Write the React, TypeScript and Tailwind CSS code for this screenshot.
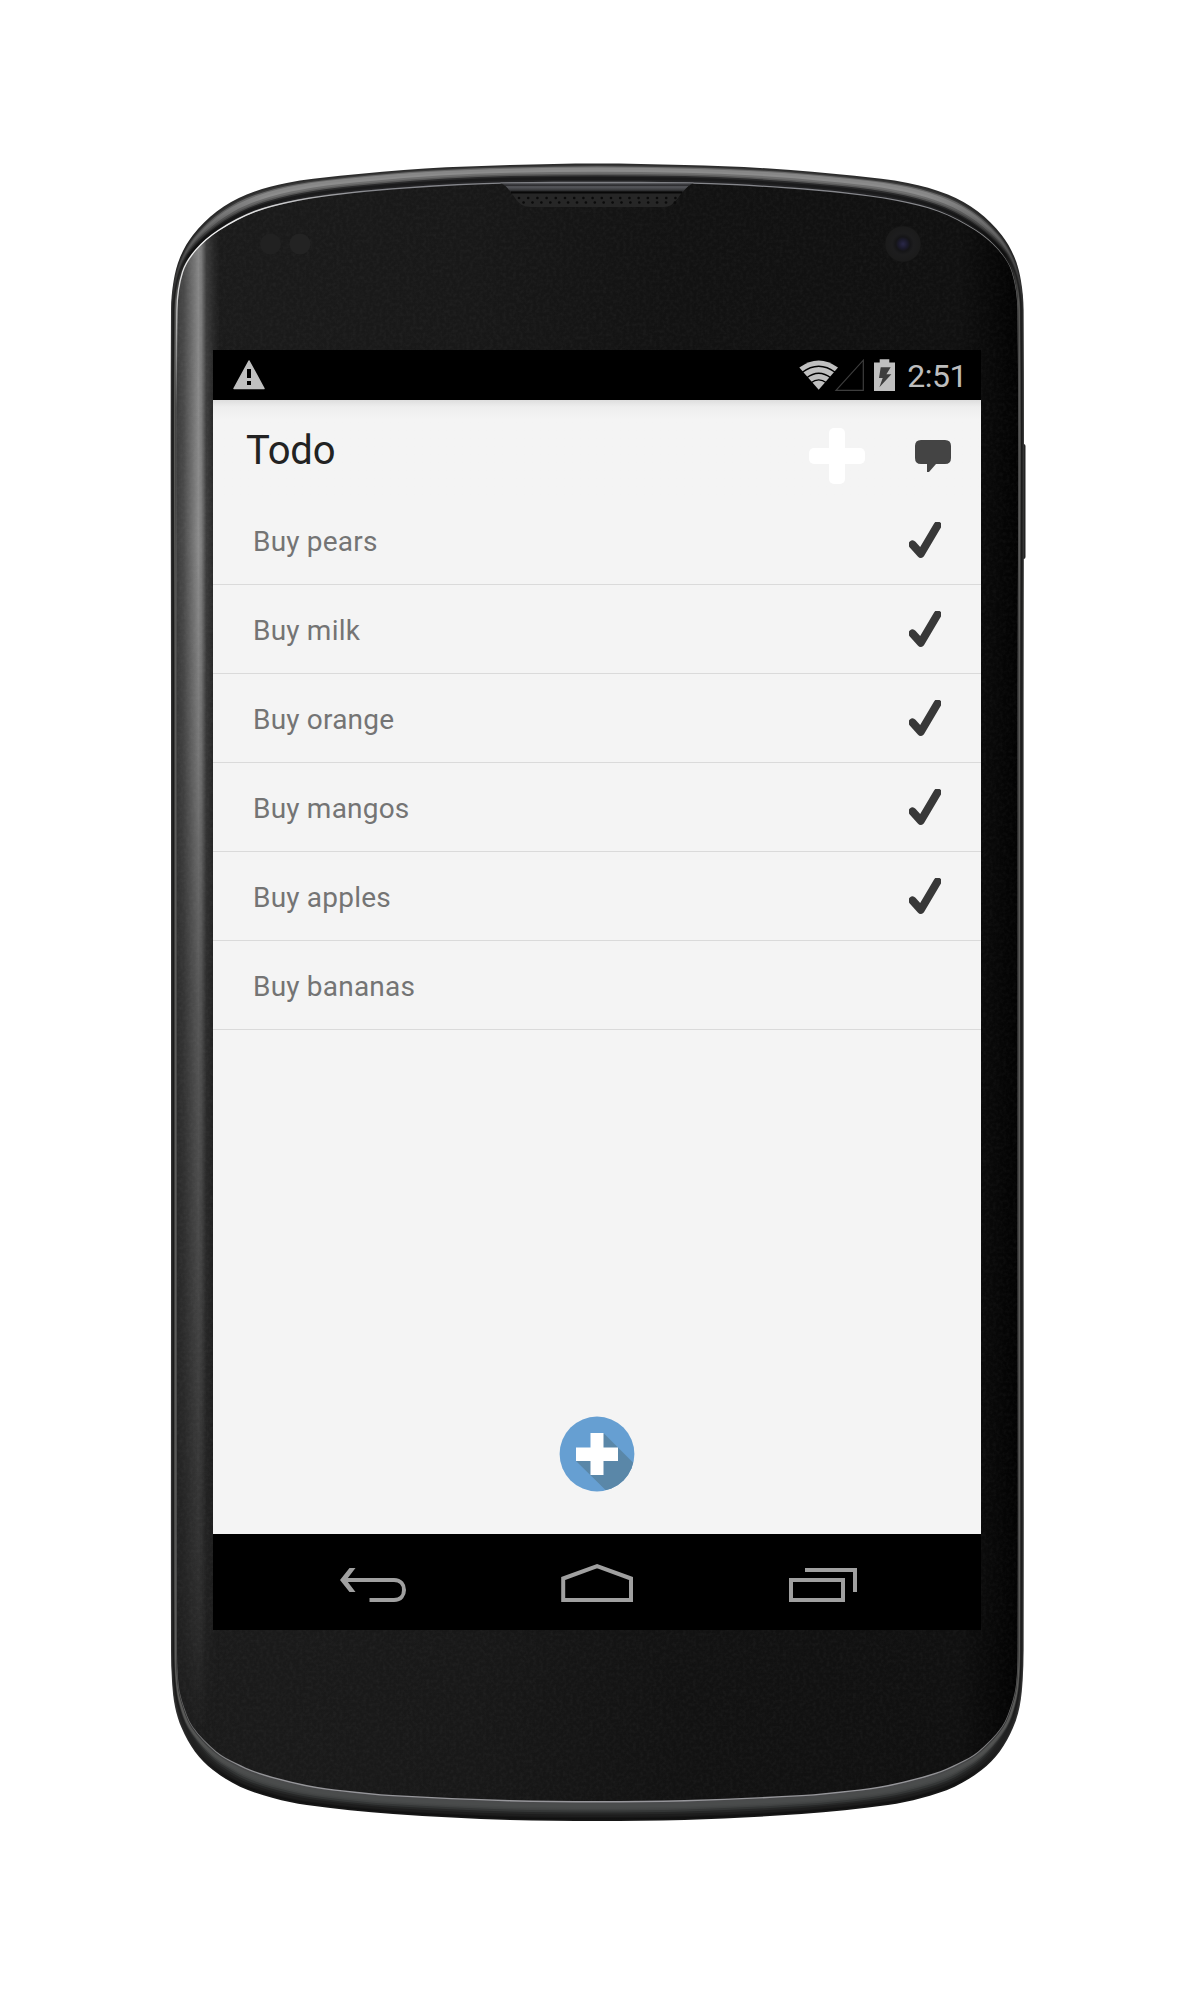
import React from "react";

type Pt = [number, number];

// Left half of the body contour, top centre to bottom centre, and the glass edge inside it.
const OUTER: Pt[] = [
  [597.3, 163.5], [510, 165], [425, 168.5], [340, 175.8], [286.7, 183], [246.7, 194.5], [216.7, 211.5],
  [193, 235], [180, 257.5], [173.6, 281], [171, 310], [171, 700], [171, 1250], [171, 1650],
  [172, 1681], [175, 1706.7], [181.7, 1728], [195, 1751.7], [213, 1770], [240, 1786.7],
  [273, 1798], [306.7, 1805], [393, 1814], [510, 1820], [597.3, 1821],
];
const INNER: Pt[] = [
  [597.3, 183], [510, 183.5], [460, 185.3], [407, 188.5], [350, 193.5], [300, 200.5], [256.7, 211.5],
  [220, 230], [196.7, 249.5], [183, 271.5], [177.2, 310], [177, 700], [177, 1250], [177, 1650],
  [178.5, 1684], [182.7, 1703], [193, 1727], [216.7, 1751.7], [236, 1763], [260, 1773],
  [306.7, 1785], [345, 1790.5], [393, 1795], [510, 1800], [597.3, 1801],
];

function contour(t: number) {
  const left = OUTER.map(([x, y], i): Pt => [x + (INNER[i][0] - x) * t, y + (INNER[i][1] - y) * t]);
  const right = left.slice(1, -1).reverse().map(([x, y]): Pt => [1194.6 - x, y]);
  const p = [...left, ...right];
  const n = p.length;
  let d = `M${p[0][0]} ${p[0][1]}`;
  for (let i = 0; i < n; i++) {
    const a = p[(i - 1 + n) % n], b = p[i], c = p[(i + 1) % n], e = p[(i + 2) % n];
    const len = Math.hypot(c[0] - b[0], c[1] - b[1]);
    const l0 = Math.hypot(c[0] - a[0], c[1] - a[1]) || 1;
    const l1 = Math.hypot(e[0] - b[0], e[1] - b[1]) || 1;
    const k = len / 3;
    d += `C${b[0] + ((c[0] - a[0]) / l0) * k} ${b[1] + ((c[1] - a[1]) / l0) * k} ${c[0] - ((e[0] - b[0]) / l1) * k} ${c[1] - ((e[1] - b[1]) / l1) * k} ${c[0]} ${c[1]}`;
  }
  return d + "Z";
}

// Depth, then the rim's colour at the top, the corners, the sides and the bottom.
const RINGS: [number, string, string, string, string][] = [
  [0, "#2c2c2c", "#222222", "#3a3a3a", "#161616"],
  [0.08, "#3a3a3a", "#2d2d2d", "#303030", "#101010"],
  [0.14, "#6a6a6a", "#444444", "#2a2a2a", "#161616"],
  [0.2, "#878787", "#505050", "#242424", "#1d1d1d"],
  [0.32, "#8c8c8c", "#383838", "#1c1c1c", "#262727"],
  [0.42, "#707070", "#222222", "#1a1a1a", "#343636"],
  [0.52, "#585858", "#151515", "#303030", "#414343"],
  [0.6, "#2a2a2b", "#101010", "#555553", "#474949"],
  [0.68, "#1a1a1b", "#0e0e0e", "#5c5c5a", "#4a4c4c"],
  [0.84, "#232325", "#1a1a1a", "#303030", "#4a4b4c"],
  [0.93, "#85868b", "#909090", "#6c6c6c", "#96969a"],
];

const DOTS = Array.from({ length: 18 }, (_, i) => i);

function Device() {
  return (
    <svg className="absolute inset-0" width="1195" height="1994" viewBox="0 0 1195 1994" aria-hidden="true">
      <defs>
        {RINGS.map(([t, a, b, c, d], i) => (
          <linearGradient key={t} id={`r${i}`} gradientUnits="userSpaceOnUse" x1="0" y1="163" x2="0" y2="1821">
            <stop offset="0" stopColor={a} />
            <stop offset="0.02" stopColor={a} />
            <stop offset="0.055" stopColor={b} />
            <stop offset="0.085" stopColor={c} />
            <stop offset="0.93" stopColor={c} />
            <stop offset="0.975" stopColor={d} />
            <stop offset="1" stopColor={d} />
          </linearGradient>
        ))}
        <linearGradient id="face" gradientUnits="userSpaceOnUse" x1="177" y1="0" x2="1018" y2="0">
          <stop offset="0" stopColor="#1b1b1b" />
          <stop offset="0.35" stopColor="#181818" />
          <stop offset="0.6" stopColor="#121212" />
          <stop offset="0.93" stopColor="#101010" />
          <stop offset="0.98" stopColor="#060606" />
          <stop offset="1" stopColor="#020202" />
        </linearGradient>
        <linearGradient id="sheen" gradientUnits="userSpaceOnUse" x1="177" y1="0" x2="220" y2="0">
          <stop offset="0" stopColor="#fff" stopOpacity="0.3" />
          <stop offset="0.15" stopColor="#fff" stopOpacity="0.42" />
          <stop offset="0.35" stopColor="#fff" stopOpacity="0.75" />
          <stop offset="0.5" stopColor="#fff" stopOpacity="1" />
          <stop offset="0.57" stopColor="#fff" stopOpacity="0.85" />
          <stop offset="0.68" stopColor="#fff" stopOpacity="0.3" />
          <stop offset="0.85" stopColor="#fff" stopOpacity="0.12" />
          <stop offset="1" stopColor="#fff" stopOpacity="0" />
        </linearGradient>
        <linearGradient id="fade" gradientUnits="userSpaceOnUse" x1="0" y1="240" x2="0" y2="1740">
          <stop offset="0" stopColor="#929292" stopOpacity="0.9" />
          <stop offset="0.2" stopColor="#929292" stopOpacity="0.95" />
          <stop offset="0.34" stopColor="#929292" stopOpacity="0.78" />
          <stop offset="0.5" stopColor="#929292" stopOpacity="0.52" />
          <stop offset="0.7" stopColor="#929292" stopOpacity="0.36" />
          <stop offset="0.93" stopColor="#929292" stopOpacity="0.13" />
          <stop offset="1" stopColor="#929292" stopOpacity="0" />
        </linearGradient>
        <linearGradient id="sheenTop" gradientUnits="userSpaceOnUse" x1="0" y1="225" x2="0" y2="262">
          <stop offset="0" stopColor="#fff" stopOpacity="0" />
          <stop offset="1" stopColor="#fff" />
        </linearGradient>
        <mask id="sheenMask" maskUnits="userSpaceOnUse" x="170" y="180" width="60" height="1640">
          <rect x="170" y="180" width="60" height="1640" fill="url(#sheen)" />
        </mask>
        <clipPath id="glass"><path d={contour(1)} /></clipPath>
        <radialGradient id="glint" gradientUnits="userSpaceOnUse" cx="205" cy="240" r="170">
          <stop offset="0" stopColor="#fff" stopOpacity="0.95" />
          <stop offset="0.35" stopColor="#fff" stopOpacity="0.75" />
          <stop offset="1" stopColor="#fff" stopOpacity="0" />
        </radialGradient>
        <linearGradient id="slot" x1="0" y1="0" x2="0" y2="1">
          <stop offset="0" stopColor="#77787d" />
          <stop offset="0.15" stopColor="#45464a" />
          <stop offset="0.3" stopColor="#2a2a2d" />
          <stop offset="0.45" stopColor="#57585d" />
          <stop offset="0.75" stopColor="#3c3d40" />
          <stop offset="1" stopColor="#1b1b1c" />
        </linearGradient>
        <radialGradient id="lens">
          <stop offset="0" stopColor="#2a2848" />
          <stop offset="0.25" stopColor="#1b1a2c" />
          <stop offset="0.4" stopColor="#151517" />
          <stop offset="0.6" stopColor="#1d1d1e" />
          <stop offset="0.95" stopColor="#1b1b1b" />
          <stop offset="1" stopColor="#161616" />
        </radialGradient>
        <filter id="grain" x="0" y="0" width="1" height="1">
          <feTurbulence type="fractalNoise" baseFrequency="0.3" numOctaves="2" seed="4" />
          <feColorMatrix values="0 0 0 0 1  0 0 0 0 1  0 0 0 0 1  0.07 0 0 0 -0.027" />
        </filter>
      </defs>
      <rect x="1020" y="444" width="5.5" height="115" rx="2" fill="#242424" />
      {RINGS.map(([t], i) => (
        <path key={t} d={contour(t)} fill={`url(#r${i})`} />
      ))}
      <path d={contour(1)} fill="url(#face)" />
      <g clipPath="url(#glass)">
        <rect x="170" y="180" width="60" height="1640" fill="url(#fade)" mask="url(#sheenMask)" />
        <rect x="170" y="180" width="856" height="1640" filter="url(#grain)" />
      </g>
      <path d={contour(0.95)} fill="none" stroke="url(#glint)" strokeWidth="1.4" />
      <path d="M500 183.5 H694 Q688 185 683 191 L678 198 Q672 207 664 207 H531 Q520 207 515 198 L510 191 Q506 185 500 183.5Z" fill="#262626" />
      <path d="M500 182.5 H694 Q688 185 683 192 H510.500 Q506 185 500 182.5Z" fill="url(#slot)" />
      <rect x="511" y="191.500" width="171" height="2" fill="#080808" />
      {DOTS.map((i) => (
        <g key={i} fill="#0a0a0a">
          <circle cx={519 + i * 9.2} cy="198" r="1.3" />
          <circle cx={523.600 + i * 8.900} cy="202.500" r="1.3" />
        </g>
      ))}
      <circle cx="270.500" cy="244" r="10.500" fill="#212121" />
      <circle cx="300" cy="244" r="10.500" fill="#232323" />
      <circle cx="903" cy="244" r="18" fill="url(#lens)" />
    </svg>
  );
}

function StatusBar() {
  return (
    <div className="flex h-[50px] items-center bg-black">
      <svg className="ml-5" width="32" height="30" viewBox="0 0 32 30">
        <path d="M16 1 L31 28.500 H1 Z" fill="#c0c0c0" stroke="#c0c0c0" strokeWidth="1.500" strokeLinejoin="round" />
        <path d="M14 9h4v9h-4zM14 21h4v4h-4z" fill="#000" />
      </svg>
      <svg className="ml-auto" width="98" height="34" viewBox="798 357 98 34">
        <path d="M818.700 388.700 L799.300 366.600 Q818.700 352.500 838 366.600Z" fill="#c0c0c0" />
        <g fill="none" stroke="#000" strokeWidth="1.400">
          <path d="M802 371.500 Q818.700 359 835.500 371.500" />
          <path d="M806.500 377 Q818.700 367.500 831 377" />
          <path d="M811 381.800 Q818.700 376 826.500 381.800" />
        </g>
        <path d="M836 389.300 H863.300 V359.200 Z" fill="none" stroke="#3d3d3d" strokeWidth="1.200" />
        <path d="M879.700 358.300h9.600v3.200h5.700v28.500h-21v-28.500h5.700z" fill="#c0c0c0" />
        <path d="M880.700 366.300h10l-4.300 7h5l-12 13 3.300-9.300h-3.700z" fill="#3d3d3d" />
      </svg>
      <span className="ml-[11px] mr-[14px] pt-0.5 text-[32px] leading-[50px] tracking-[-0.5px] text-[#bdbdbd]">2:51</span>
    </div>
  );
}

function Check() {
  return (
    <svg width="32" height="36" viewBox="0 0 32 36">
      <path d="M3.500 22.500 L11.800 31.700 L28.500 3.500" fill="none" stroke="#383838" strokeWidth="8" strokeLinecap="round" strokeLinejoin="round" />
    </svg>
  );
}

const ITEMS = [
  { label: "Buy pears", done: true },
  { label: "Buy milk", done: true },
  { label: "Buy orange", done: true },
  { label: "Buy mangos", done: true },
  { label: "Buy apples", done: true },
  { label: "Buy bananas", done: false },
];

export default function App() {
  return (
    <div className="relative h-[1994px] w-[1195px] overflow-hidden bg-white font-['Roboto',sans-serif]">
      <Device />
      <div className="relative pl-[213px] pt-[350px]">
        <main className="flex h-[1280px] w-[768px] flex-col bg-[#f4f4f4]">
          <StatusBar />
          <header className="flex h-24 bg-linear-to-b from-[#dedede] via-[#eeeeee] via-[7px] to-[#f4f4f4] to-[19px] pl-[33px]">
            <h1 className="mt-[27px] text-[40px] leading-[48px] tracking-[-0.2px] text-[#222]">Todo</h1>
            <svg className="ml-auto mr-[30px] mt-7" width="142" height="56" viewBox="809 428 142 56">
              <rect x="829" y="428" width="16" height="56" rx="5" fill="#fff" />
              <rect x="809" y="448" width="56" height="16" rx="5" fill="#fff" />
              <path d="M921 440h24q6 0 6 6v12q0 6-6 6h-9l-7 8h-2v-8h-6q-6 0-6-6v-12q0-6 6-6z" fill="#444" />
            </svg>
          </header>
          <ul>
            {ITEMS.map((item) => (
              <li key={item.label} className="flex h-[89px] items-center justify-between border-b border-[#dadada] pl-10 pr-10">
                <span className="pt-[3px] text-[28px] leading-8 tracking-[0.2px] text-[#747474]">{item.label}</span>
                {item.done && <Check />}
              </li>
            ))}
          </ul>
          <button className="mx-auto mb-[42px] mt-auto block" aria-label="Add">
            <svg className="block" width="76" height="76" viewBox="-38 -38 76 76">
              <defs><clipPath id="disc"><circle r="37.400" /></clipPath></defs>
              <circle r="37.400" fill="#669fd2" />
              <path d="M6.500 -21 L60 32.500 V60 H33 L-21 7 L0 0Z" fill="#5a87a8" clipPath="url(#disc)" />
              <path d="M-6.500 -21h13v14.500H21v13.500H6.500V21h-13V7H-21V-6.500h14.500z" fill="#fff" />
            </svg>
          </button>
          <nav className="h-24 bg-black">
            <svg className="block" width="768" height="96" viewBox="213 1534 768 96" fill="none" stroke="#a0a0a0" strokeWidth="4">
              <path d="M343 1580H394C401 1580 404 1585 404 1590S401 1600 394 1600H369.500" />
              <path d="M340 1580L349.500 1568H355.500L346.300 1580L355.500 1592H349.500Z" fill="#a0a0a0" stroke="none" />
              <path d="M563.200 1600V1578.500L597.100 1566.200L631 1578.500V1600Z" />
              <path d="M791 1580H843V1600H791ZM805 1570H855V1592" />
            </svg>
          </nav>
        </main>
      </div>
    </div>
  );
}
